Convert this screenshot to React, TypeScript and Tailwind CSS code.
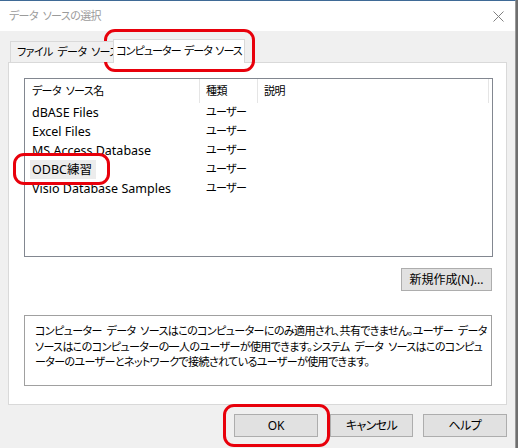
import React from 'react';

const font = "font-['Noto_Sans','Noto_Sans_CJK_JP',sans-serif] [font-feature-settings:'palt']";
// kana in the original UI font are narrower than Noto's
const jp = 'text-[11px] tracking-[-0.6px] [word-spacing:2.5px]';
const tabJp = 'text-[11px] tracking-[-0.95px] [word-spacing:1.5px]';

const rows = [
  { name: 'dBASE Files', kind: 'ユーザー' },
  { name: 'Excel Files', kind: 'ユーザー' },
  { name: 'MS Access Database', kind: 'ユーザー' },
  { name: 'ODBC練習', kind: 'ユーザー', focus: true },
  { name: 'Visio Database Samples', kind: 'ユーザー' },
];

function Mark({ className }: { className: string }) {
  // red annotation frame drawn over the dialog
  return <div className={`pointer-events-none absolute rounded-[11px] border-[3.5px] border-[#e8000b] ${className}`} />;
}

function Btn({ children, className = '' }: { children: React.ReactNode; className?: string }) {
  return (
    <button className={`flex h-[23px] items-center justify-center whitespace-nowrap border border-[#adadad] bg-[#e1e1e1] text-[12px] text-black ${className}`}>
      {children}
    </button>
  );
}

export default function App() {
  return (
    <div className={`relative flex h-[448px] w-[518px] overflow-hidden bg-[#6f6f6f] ${font}`}>
      <div className="flex h-full w-[516px] flex-col border-t border-[#3f6a96] border-r border-r-[#9a9a9a] bg-[#f0f0f0]">
        {/* title bar */}
        <div className="flex h-[30px] shrink-0 items-center justify-between bg-white pl-[9px] pr-[10px]">
          <span className={`${jp} text-[#9b9b9b]`}>データ ソースの選択</span>
          <svg width="11" height="11" viewBox="0 0 11 11" className="mr-[1px]">
            <path d="M0.5 0.5L10.5 10.5M10.5 0.5L0.5 10.5" stroke="#808080" strokeWidth="1" />
          </svg>
        </div>

        <div className="flex flex-1 flex-col px-[8px] pt-[8px]">
          {/* tabs */}
          <div className="relative z-10 flex h-[23px] items-end pl-[2px]">
            <div className={`flex h-[21px] w-[105px] items-center overflow-hidden whitespace-nowrap border border-b-0 border-[#d9d9d9] bg-[#f0f0f0] pl-[6px] text-black ${jp}`}>
              ファイル データ ソース
            </div>
            <div className={`-ml-[2px] mb-[-1px] flex h-[24px] w-[132px] items-center justify-center whitespace-nowrap border border-b-0 border-[#d9d9d9] bg-white text-black ${tabJp}`}>
              コンピューター データ ソース
            </div>
          </div>

          {/* tab page */}
          <div className="flex h-[343px] flex-col border border-[#d9d9d9] bg-white px-[15px] pt-[15px]">
            <div className="h-[179px] w-[469px] border border-[#828790] bg-white text-[12.5px] text-black">
              <div className={`flex h-[24px] ${jp}`}>
                <div className="flex w-[175px] items-center border-r border-[#e5e5e5] pl-[7px]">データ ソース名</div>
                <div className="flex w-[58px] items-center border-r border-[#e5e5e5] pl-[6px]">種類</div>
                <div className="flex w-[231px] items-center border-r border-[#e5e5e5] pl-[6px]">説明</div>
              </div>
              {rows.map((r) => (
                <div key={r.name} className="flex h-[19px] items-center">
                  <div className="w-[175px] pl-[5px]">
                    <span className={`inline-block h-[19px] px-[2px] leading-[19px] whitespace-nowrap ${r.focus ? 'w-[66px] bg-[#ececec]' : ''}`}>{r.name}</span>
                  </div>
                  <div className={`w-[58px] pl-[6px] ${jp}`}>{r.kind}</div>
                  <div className="flex-1" />
                </div>
              ))}
            </div>

            <div className="mt-[11px] flex w-[468px] justify-end">
              <Btn className="w-[91px]">新規作成(N)...</Btn>
            </div>

            <div className={`mt-[24px] h-[71px] w-[468px] whitespace-nowrap border border-[#a0a0a0] bg-white pl-[10px] pt-[7px] leading-[15.5px] text-black ${jp}`}>
              コンピューター データ ソースはこのコンピューターにのみ適用され、共有できません。ユーザー データ
              <br />
              ソースはこのコンピューターの一人のユーザーが使用できます。システム データ ソースはこのコンピュ
              <br />
              ーターのユーザーとネットワークで接続されているユーザーが使用できます。
            </div>
          </div>

          {/* dialog buttons */}
          <div className="flex pl-[226px] pt-[9px]">
            <Btn className="w-[85px]">OK</Btn>
            <Btn className={`ml-[12px] w-[83px] ${jp}`}>キャンセル</Btn>
            <Btn className={`ml-[10px] w-[85px] ${jp}`}>ヘルプ</Btn>
          </div>
        </div>
      </div>

      <Mark className="left-[104px] top-[29px] h-[43px] w-[151px]" />
      <Mark className="left-[13px] top-[153px] h-[32px] w-[97px]" />
      <Mark className="left-[223px] top-[404px] h-[43px] w-[107px]" />
    </div>
  );
}
